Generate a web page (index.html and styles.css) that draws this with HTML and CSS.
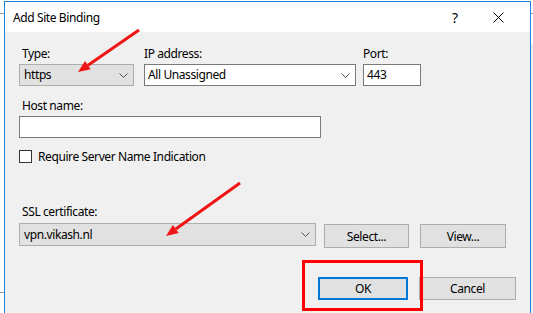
FILE: index.html
```html
<!DOCTYPE html>
<html lang="en">
<head>
    <meta charset="UTF-8">
    <meta name="viewport" content="width=device-width, initial-scale=1.0">
    <title>Add Site Binding</title>
    <link rel="stylesheet" href="styles.css">
</head>
<body>
    <div class="desktop">
        <div class="backdrop-right"></div>

        <div class="window">
            <div class="titlebar">
                <span class="title">Add Site Binding</span>
                <span class="help">?</span>
                <span class="close">
                    <svg width="11" height="11" viewBox="0 0 11 11"><path d="M0.5 0.5 L10.5 10.5 M10.5 0.5 L0.5 10.5" stroke="#000" stroke-width="1"/></svg>
                </span>
            </div>

            <div class="client">
                <div class="row row-top">
                    <div class="field field-type">
                        <label class="lbl lbl-first">Type:</label>
                        <div class="combo combo-gray">
                            <span>https</span>
                            <svg class="chev" width="9" height="5" viewBox="0 0 9 5"><polyline points="0.5,0.5 4.5,4.5 8.5,0.5" fill="none" stroke="#555" stroke-width="1"/></svg>
                        </div>
                    </div>
                    <div class="field field-ip">
                        <label class="lbl">IP address:</label>
                        <div class="combo combo-white">
                            <span>All Unassigned</span>
                            <svg class="chev" width="9" height="5" viewBox="0 0 9 5"><polyline points="0.5,0.5 4.5,4.5 8.5,0.5" fill="none" stroke="#555" stroke-width="1"/></svg>
                        </div>
                    </div>
                    <div class="field field-port">
                        <label class="lbl">Port:</label>
                        <div class="textbox">443</div>
                    </div>
                </div>

                <div class="field field-host">
                    <label class="lbl lbl-first">Host name:</label>
                    <div class="textbox host-box"></div>
                </div>

                <div class="check-row">
                    <span class="checkbox"></span>
                    <span class="check-label">Require Server Name Indication</span>
                </div>

                <label class="lbl lbl-first ssl-label">SSL certificate:</label>
                <div class="row ssl-row">
                    <div class="combo combo-gray ssl-combo">
                        <span>vpn.vikash.nl</span>
                        <svg class="chev" width="9" height="5" viewBox="0 0 9 5"><polyline points="0.5,0.5 4.5,4.5 8.5,0.5" fill="none" stroke="#555" stroke-width="1"/></svg>
                    </div>
                    <button class="btn btn-select">Select...</button>
                    <button class="btn btn-view">View...</button>
                </div>

                <div class="row footer">
                    <button class="btn btn-ok">OK</button>
                    <button class="btn btn-cancel">Cancel</button>
                </div>
            </div>
        </div>

        <!-- annotations drawn on top of the screenshot -->
        <div class="highlight"></div>
        <svg class="arrows" width="533" height="313" viewBox="0 0 533 313">
            <line x1="139" y1="30" x2="88" y2="65.2" stroke="#f01414" stroke-width="3"/>
            <polygon points="78,72 90.7,69.3 85.1,61.1" fill="#f01414"/>
            <line x1="240" y1="183" x2="175.8" y2="229" stroke="#f01414" stroke-width="3"/>
            <polygon points="166,236 178.7,233.1 172.9,224.9" fill="#f01414"/>
        </svg>
    </div>
</body>
</html>
```

FILE: styles.css
```css
html, body {
    margin: 0;
    padding: 0;
}
body {
    font-family: "Noto Sans", "Open Sans", sans-serif;
    font-size: 12px;
    letter-spacing: -0.4px;
    color: #000;
    background-color: #fff;
    overflow: hidden;
}
.desktop {
    position: relative;
    width: 533px;
    height: 313px;
    overflow: hidden;
    background:
        linear-gradient(#9a9a9a, #9a9a9a) 0 13px / 100% 1px no-repeat,
        linear-gradient(#9a9a9a, #9a9a9a) 0 292px / 100% 1px no-repeat,
        #fff;
}
.backdrop-right {
    position: absolute;
    left: 531px;
    top: 44px;
    width: 2px;
    height: 269px;
    background-color: #ececec;
}
.window {
    position: absolute;
    left: 4px;
    top: 1px;
    width: 525px;
    height: 340px;
    border: 1px solid #1c84d8;
    background-color: #f0f0f0;
}
.titlebar {
    height: 30px;
    display: flex;
    align-items: center;
    background-color: #fff;
    padding: 0 22px 0 8px;
}
.title {
    flex: 1;
    font-size: 12px;
}
.help {
    width: 20px;
    text-align: center;
    font-size: 14px;
    letter-spacing: 0;
    margin-right: 23px;
}
.close {
    width: 20px;
    height: 11px;
    display: flex;
    justify-content: center;
}
.client {
    padding: 14px 14px 0 14px;
}
.row {
    display: flex;
}
.lbl {
    display: block;
    line-height: 15px;
    height: 15px;
    margin-bottom: 3px;
}
.lbl-first {
    padding-left: 3px;
}
.field-type {
    width: 115px;
    margin-right: 10px;
}
.field-ip {
    width: 212px;
    margin-right: 7px;
}
.field-port {
    width: 58px;
}
.combo, .textbox {
    box-sizing: border-box;
    height: 22px;
    display: flex;
    align-items: center;
    justify-content: space-between;
    padding: 0 5px 0 3px;
    line-height: 20px;
}
.combo-gray {
    background-color: #e1e1e1;
    border: 1px solid #adadad;
    padding-left: 4px;
}
.combo-white {
    background-color: #fff;
    border: 1px solid #7a7a7a;
}
.textbox {
    background-color: #fff;
    border: 1px solid #7a7a7a;
}
.chev {
    display: block;
}
.field-host {
    margin-top: 12px;
}
.host-box {
    width: 302px;
}
.check-row {
    margin-top: 12px;
    display: flex;
    align-items: center;
    height: 13px;
}
.checkbox {
    box-sizing: border-box;
    width: 13px;
    height: 13px;
    border: 1px solid #333;
    background-color: #fff;
    margin-right: 6px;
}
.check-label {
    line-height: 13px;
}
.ssl-label {
    margin-top: 41px;
    margin-bottom: 4px;
}
.ssl-row {
    align-items: flex-start;
}
.ssl-combo {
    width: 297px;
    height: 23px;
}
.btn {
    box-sizing: border-box;
    font-family: inherit;
    font-size: 12px;
    letter-spacing: -0.4px;
    color: #000;
    background-color: #e1e1e1;
    border: 1px solid #adadad;
    padding: 0;
    height: 24px;
}
.btn-select {
    width: 85px;
    margin: 1px 0 0 8px;
}
.btn-view {
    width: 86px;
    margin: 1px 0 0 11px;
}
.footer {
    justify-content: flex-end;
    margin-top: 29px;
}
.btn-ok {
    width: 90px;
    height: 23px;
    border: 2px solid #0078d7;
}
.btn-cancel {
    width: 97px;
    height: 23px;
    margin-left: 11px;
}
.highlight {
    position: absolute;
    left: 302px;
    top: 260px;
    width: 115px;
    height: 45px;
    border: 3px solid #f00;
}
.arrows {
    position: absolute;
    left: 0;
    top: 0;
}
```
